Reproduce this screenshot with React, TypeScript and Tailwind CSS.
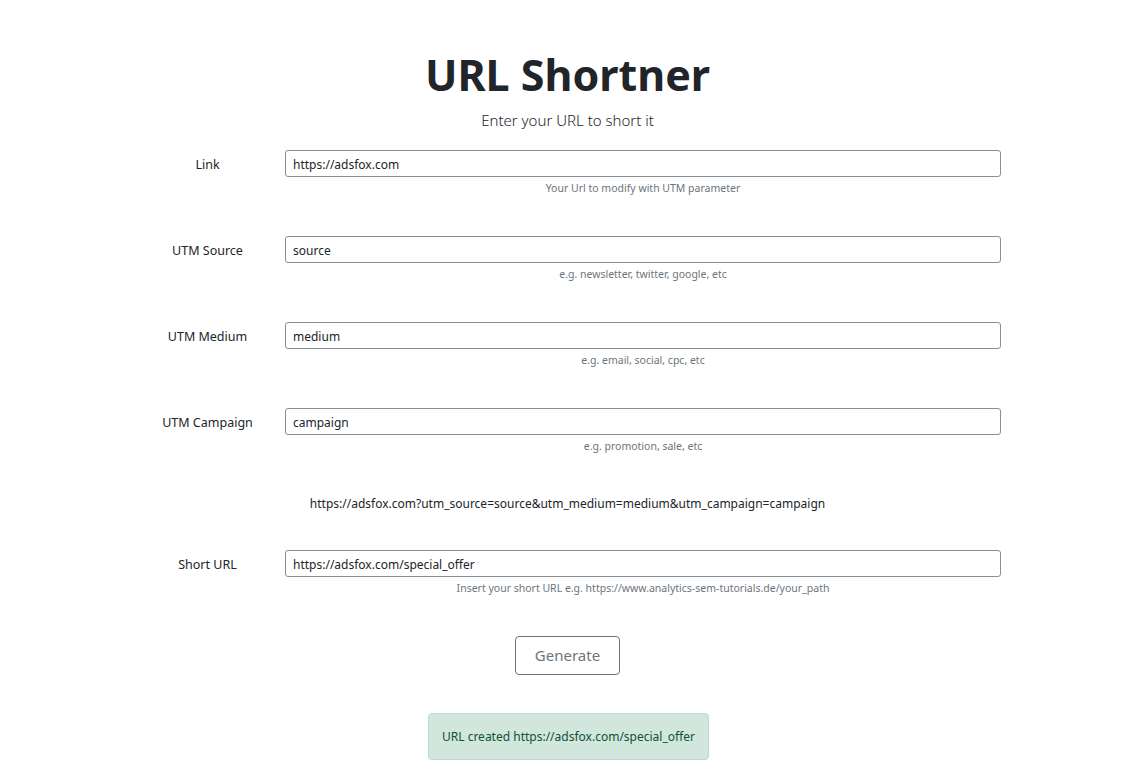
import React from 'react';

const fields = [
  { label: 'Link', value: 'https://adsfox.com', help: 'Your Url to modify with UTM parameter' },
  { label: 'UTM Source', value: 'source', help: 'e.g. newsletter, twitter, google, etc' },
  { label: 'UTM Medium', value: 'medium', help: 'e.g. email, social, cpc, etc' },
  { label: 'UTM Campaign', value: 'campaign', help: 'e.g. promotion, sale, etc' },
];

const Row: React.FC<{ label: string; value: string; help: string }> = ({ label, value, help }) => (
  <div>
    <div className="flex items-center">
      <label className="w-[155px] text-center text-[12.5px] text-[#212529] pt-[3px]">{label}</label>
      <input
        readOnly
        value={value}
        className="w-[716px] h-[27px] px-[7px] pt-[2px] text-[12px] text-[#212529] border border-[#8a8f94] rounded-[3px] outline-none"
      />
    </div>
    <div className="ml-[155px] w-[716px] text-center text-[10.5px] text-[#6c757d] mt-[3px] leading-[17px]">{help}</div>
  </div>
);

export default function App() {
  return (
    <div className="min-h-[769px] bg-white text-[#212529]" style={{ fontFamily: '"Noto Sans", sans-serif' }}>
      <div className="text-center pt-[46px]">
        <h1 className="text-[43px] font-bold leading-[58px]">URL Shortner</h1>
        <p className="text-[15px] font-light leading-[22px] mt-[5px]">Enter your URL to short it</p>
      </div>

      <div className="w-[875px] mx-auto mt-[19px]">
        <div className="flex flex-col gap-[39px]">
          {fields.map((f) => (
            <Row key={f.label} {...f} />
          ))}
        </div>

        <div className="text-center text-[12px] mt-[40px]">
          https://adsfox.com?utm_source=source&amp;utm_medium=medium&amp;utm_campaign=campaign
        </div>

        <div className="mt-[37px]">
          <Row
            label="Short URL"
            value="https://adsfox.com/special_offer"
            help="Insert your short URL e.g. https://www.analytics-sem-tutorials.de/your_path"
          />
        </div>
      </div>

      <div className="flex flex-col items-center">
        <button className="mt-[39px] w-[105px] h-[39px] border border-[#6c757d] rounded-[4px] text-[15px] text-[#6c757d]">
          Generate
        </button>
        <div className="mt-[38px] ml-[2px] w-[281px] h-[47px] flex items-center justify-center bg-[#d1e7dd] border border-[#badbcc] rounded-[4px] text-[12px] text-[#0f5132]">
          URL created https://adsfox.com/special_offer
        </div>
      </div>
    </div>
  );
}
